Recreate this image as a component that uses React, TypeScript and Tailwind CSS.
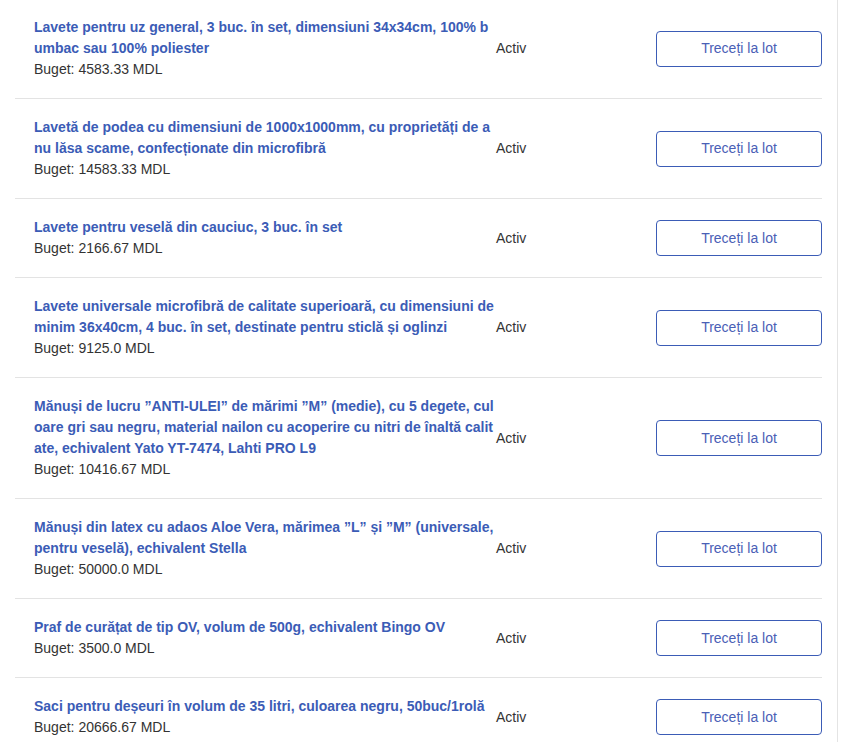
const lots = [
  {
    title: "Lavete pentru uz general, 3 buc. în set, dimensiuni 34x34cm, 100% bumbac sau 100% poliester",
    budget: "4583.33",
  },
  {
    title: "Lavetă de podea cu dimensiuni de 1000x1000mm, cu proprietăți de a nu lăsa scame, confecționate din microfibră",
    budget: "14583.33",
  },
  { title: "Lavete pentru veselă din cauciuc, 3 buc. în set", budget: "2166.67" },
  {
    title: "Lavete universale microfibră de calitate superioară, cu dimensiuni de minim 36x40cm, 4 buc. în set, destinate pentru sticlă și oglinzi",
    budget: "9125.0",
  },
  {
    title: "Mănuși de lucru ”ANTI-ULEI” de mărimi ”M” (medie), cu 5 degete, culoare gri sau negru, material nailon cu acoperire cu nitri de înaltă calitate, echivalent Yato YT-7474, Lahti PRO L9",
    budget: "10416.67",
  },
  {
    title: "Mănuși din latex cu adaos Aloe Vera, mărimea ”L” și ”M” (universale, pentru veselă), echivalent Stella",
    budget: "50000.0",
  },
  { title: "Praf de curățat de tip OV, volum de 500g, echivalent Bingo OV", budget: "3500.0" },
  {
    title: "Saci pentru deșeuri în volum de 35 litri, culoarea negru, 50buc/1rolă",
    budget: "20666.67",
  },
];

export default function App() {
  return (
    <div className="h-[743px] w-[853px] overflow-hidden bg-white font-['Liberation_Sans',Arial,sans-serif] text-[14px] leading-[21px] text-[#333]">
      <div className="h-full w-[838px] border-r border-[#e4e4e4] px-[15px]">
        <ul className="-mt-[1px]">
          {lots.map((lot, index) => (
            <li key={index} className="flex items-center border-b border-[#e3e3e3] py-[18px] pl-[19px]">
              <div className="w-[462px] shrink-0">
                <a href="#" className="block break-all font-bold text-[#3b5cb6]">
                  {lot.title}
                </a>
                <div>Buget: {lot.budget} MDL</div>
              </div>
              <div className="flex-1">Activ</div>
              <button className="h-[36px] w-[166px] shrink-0 rounded-[4px] border border-[#3b5cb6] bg-white text-[#4a60b6]">
                Treceți la lot
              </button>
            </li>
          ))}
        </ul>
      </div>
    </div>
  );
}
